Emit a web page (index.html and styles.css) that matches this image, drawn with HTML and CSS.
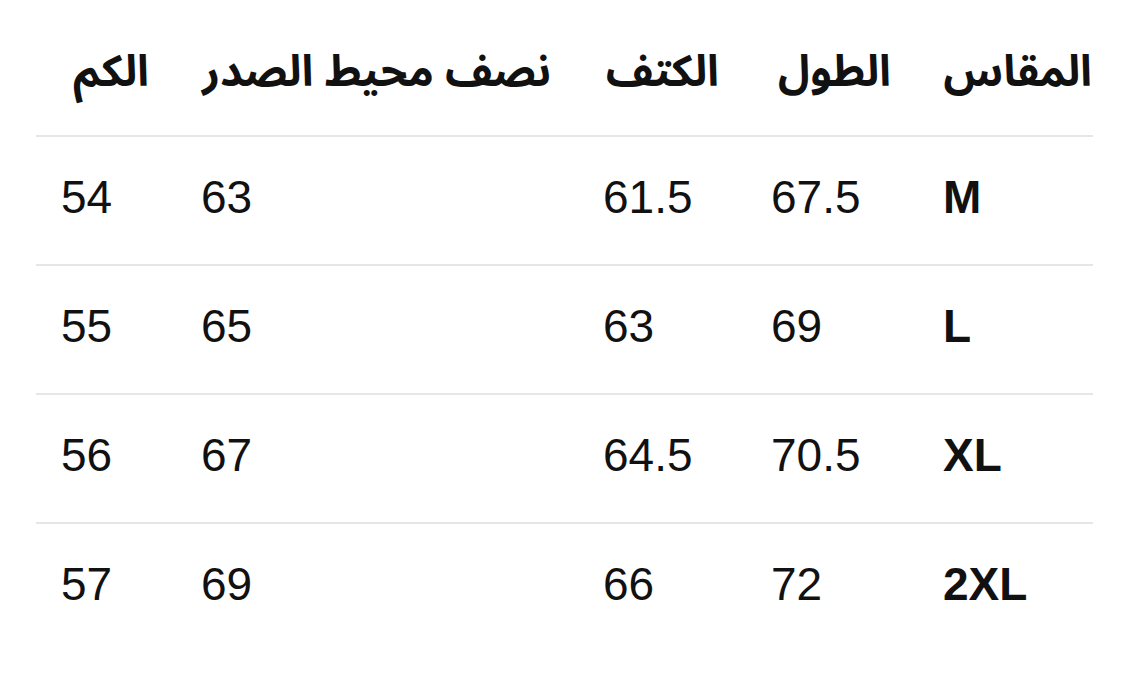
FILE: index.html
```html
<!DOCTYPE html>
<html lang="ar" dir="rtl">
<head>
<meta charset="utf-8">
<link rel="stylesheet" href="styles.css">
</head>
<body>
<div class="wrap">
<table class="size-table">
  <colgroup>
    <col class="c1"><col class="c2"><col class="c3"><col class="c4"><col class="c5">
  </colgroup>
  <thead>
    <tr><th>المقاس</th><th>الطول</th><th>الكتف</th><th>نصف محيط الصدر</th><th>الكم</th></tr>
  </thead>
  <tbody>
    <tr><td class="size">M</td><td>67.5</td><td>61.5</td><td>63</td><td>54</td></tr>
    <tr><td class="size">L</td><td>69</td><td>63</td><td>65</td><td>55</td></tr>
    <tr><td class="size">XL</td><td>70.5</td><td>64.5</td><td>67</td><td>56</td></tr>
    <tr><td class="size">2XL</td><td>72</td><td>66</td><td>69</td><td>57</td></tr>
  </tbody>
</table>
</div>
</body>
</html>
```

FILE: styles.css
```css
html, body {
  margin: 0;
  padding: 0;
  background: #ffffff;
}
.wrap {
  padding: 8px 44px 0 36px;
}
.size-table {
  width: 1057px;
  table-layout: fixed;
  border-collapse: collapse;
  color: #111111;
  font-family: "Liberation Sans", "DejaVu Sans", sans-serif;
}
.c1 { width: 175px; }
.c2 { width: 172px; }
.c3 { width: 168px; }
.c4 { width: 402px; }
.c5 { width: 140px; }
.size-table th,
.size-table td {
  vertical-align: middle;
  white-space: nowrap;
}
.size-table th {
  height: 127px;
  padding: 0 27px 0 0;
  text-align: right;
  font-family: "Noto Sans Arabic", "Noto Kufi Arabic", "Noto Naskh Arabic", "DejaVu Sans", sans-serif;
  font-weight: bold;
  font-size: 43.5px;
}
.size-table th:first-child {
  padding-right: 1px;
}
.size-table td {
  height: 120px;
  padding: 0 0 7px 25px;
  text-align: left;
  font-size: 46px;
  font-weight: normal;
}
.size-table td.size {
  font-weight: bold;
}
.size-table thead tr,
.size-table tbody tr {
  border-bottom: 2px solid #e6e6e6;
}
.size-table tbody tr:last-child {
  border-bottom: none;
}
```
